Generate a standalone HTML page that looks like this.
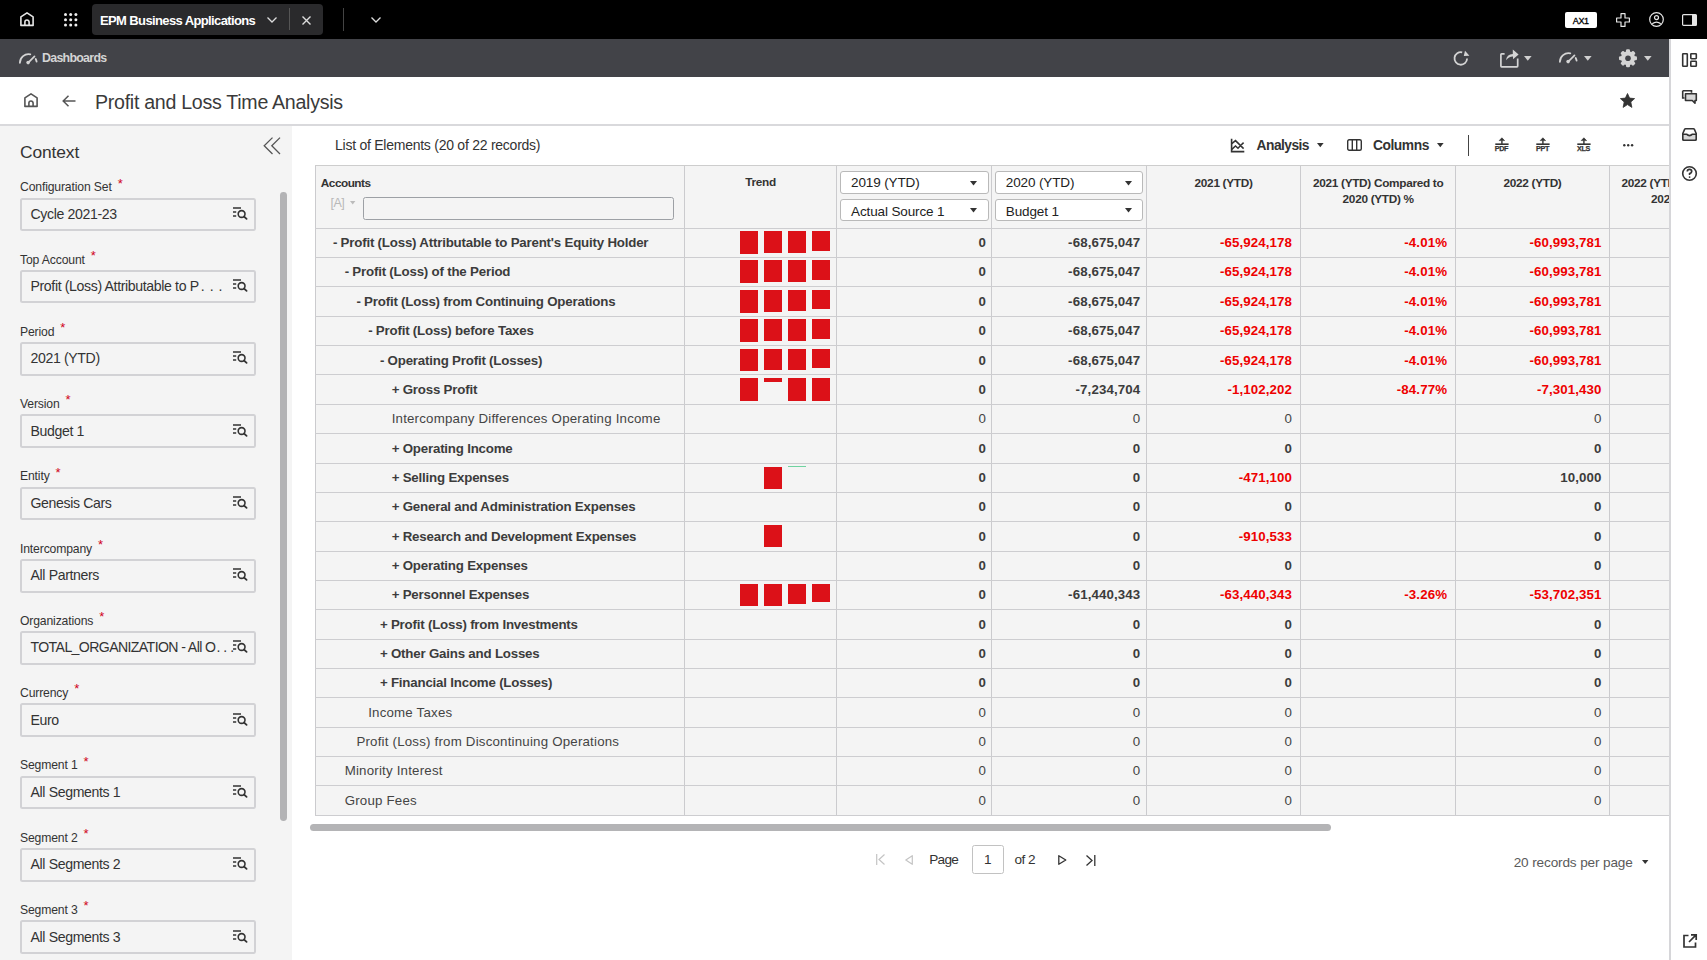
<!DOCTYPE html>
<html><head><meta charset="utf-8"><title>Profit and Loss Time Analysis</title>
<style>
*{box-sizing:border-box;margin:0;padding:0}
html,body{width:1707px;height:960px;overflow:hidden;background:#fff;font-family:"Liberation Sans",sans-serif;color:#333}
.a{position:absolute;white-space:nowrap}
svg{position:absolute;overflow:visible}
#top{left:0;top:0;width:1707px;height:39px;background:#000}
#bar2{left:0;top:39px;width:1670px;height:38px;background:#424348}
#side{left:1669px;top:39px;width:38px;height:921px;background:#fff;border-left:2px solid #d6d6d9}
#hdr{left:0;top:77px;width:1669px;height:49px;background:#fff;border-bottom:2px solid #d9d9dc}
#panel{left:0;top:126px;width:291.6px;height:834px;background:#f4f4f4}
.lbl{font-size:12.2px;letter-spacing:-0.15px;color:#333}
.ast{color:#d0021b;font-size:13px}
.inp{left:19.6px;width:236.4px;height:33.6px;border:2px solid #d2d2d5;border-radius:2.5px;background:#f4f4f4}
.val{font-size:14.1px;letter-spacing:-0.36px;color:#333}
.cell{font-size:13.3px;font-weight:700;color:#3c3c3c}
.cell.reg{color:#444}
.reg{font-weight:400}
.red{color:#ee0000}
.hd{font-size:11.8px;font-weight:700;letter-spacing:-0.3px;color:#333}
.bar{position:absolute;background:#dc1118}
.dd{position:absolute;background:#fff;border:1.3px solid #b9b9b9;border-radius:3px}
.ddt{font-size:13.5px;letter-spacing:-0.12px;color:#222}
</style></head><body>
<div class="a" id="top"></div>
<svg style="left:20px;top:12px" width="14" height="14" viewBox="0 0 14 14"><path d="M0.9 4.9 L7 0.9 L13.1 4.9 V13.4 H0.9 Z M4.9 13.4 V10.1 A2.1 2.1 0 0 1 9.1 10.1 V13.4" fill="none" stroke="#e6e6e6" stroke-width="1.6" stroke-linejoin="round"/></svg>
<svg style="left:64px;top:13px" width="14" height="14"><circle cx="1.5" cy="1.5" r="1.5" fill="#eee"/><circle cx="1.5" cy="6.7" r="1.5" fill="#eee"/><circle cx="1.5" cy="11.9" r="1.5" fill="#eee"/><circle cx="6.7" cy="1.5" r="1.5" fill="#eee"/><circle cx="6.7" cy="6.7" r="1.5" fill="#eee"/><circle cx="6.7" cy="11.9" r="1.5" fill="#eee"/><circle cx="11.9" cy="1.5" r="1.5" fill="#eee"/><circle cx="11.9" cy="6.7" r="1.5" fill="#eee"/><circle cx="11.9" cy="11.9" r="1.5" fill="#eee"/></svg>
<div class="a" style="left:92px;top:3.7px;width:230.7px;height:31.3px;background:#2a2a2c;border-radius:4px"></div>
<div class="a" style="left:100px;top:11.8px;font-size:13px;font-weight:700;letter-spacing:-0.62px;color:#fff;line-height:18px">EPM Business Applications</div>
<svg style="left:267px;top:17px" width="10" height="6"><path d="M0.5 0.5 L5 5 L9.5 0.5" fill="none" stroke="#ddd" stroke-width="1.3"/></svg>
<div class="a" style="left:289px;top:8.3px;width:1px;height:22px;background:#555"></div>
<svg style="left:302px;top:15.7px" width="9" height="9"><path d="M0.5 0.5 L8.5 8.5 M8.5 0.5 L0.5 8.5" fill="none" stroke="#ddd" stroke-width="1.4"/></svg>
<div class="a" style="left:342.5px;top:8.3px;width:1px;height:22.5px;background:#444"></div>
<svg style="left:371px;top:17px" width="10" height="6"><path d="M0.5 0.5 L5 5 L9.5 0.5" fill="none" stroke="#ddd" stroke-width="1.3"/></svg>
<div class="a" style="left:1565px;top:11.5px;width:31.5px;height:16.5px;background:#fff;border-radius:2px"></div>
<div class="a" style="left:1565px;top:16px;width:31.5px;text-align:center;font-size:9px;font-weight:400;color:#000;line-height:11px;letter-spacing:-0.3px;-webkit-text-stroke:0.3px #000">AX1</div>
<svg style="left:1615.5px;top:13px" width="14" height="14" viewBox="0 0 14 14"><path d="M5 0.6 H9 V5 H13.4 V9 H9 V13.4 H5 V9 H0.6 V5 H5 Z" fill="none" stroke="#e6e6e6" stroke-width="1.2" stroke-linejoin="round"/></svg>
<svg style="left:1649px;top:12px" width="15" height="15" viewBox="0 0 15 15"><circle cx="7.5" cy="7.5" r="6.8" fill="none" stroke="#e6e6e6" stroke-width="1.2"/><circle cx="7.5" cy="5.6" r="2" fill="none" stroke="#e6e6e6" stroke-width="1.2"/><path d="M3.2 11.8 Q7.5 8.5 11.8 11.8" fill="none" stroke="#e6e6e6" stroke-width="1.2"/></svg>
<svg style="left:1681.5px;top:13.6px" width="15" height="12" viewBox="0 0 15 12"><rect x="0.6" y="0.6" width="13.8" height="10.8" rx="1" fill="none" stroke="#e6e6e6" stroke-width="1.2"/><rect x="10" y="0.6" width="4.4" height="10.8" fill="#e6e6e6"/></svg>
<div class="a" id="bar2"></div>
<svg style="left:18px;top:51.5px" width="21" height="14" viewBox="0 0 21 14"><path d="M1.9 10.8 A8.6 8.6 0 0 1 12.3 2.4" fill="none" stroke="#d4d4d4" stroke-width="1.8" stroke-linecap="round"/><path d="M17.7 6.95 A8.2 8.2 0 0 1 18.6 9.66" fill="none" stroke="#d4d4d4" stroke-width="1.8" stroke-linecap="round"/><path d="M10.3 10.6 L16.5 4.4" stroke="#d4d4d4" stroke-width="1.7" stroke-linecap="round"/><circle cx="10.1" cy="10.6" r="1.8" fill="#d4d4d4"/></svg>
<div class="a" style="left:42px;top:49.5px;font-size:12.4px;font-weight:700;letter-spacing:-0.72px;color:#d4d4d4;line-height:16px">Dashboards</div>
<svg style="left:1453px;top:50px" width="18" height="18" viewBox="0 0 18 18"><path d="M14.1 8.6 A6.3 6.3 0 1 1 9.2 2.3" fill="none" stroke="#d4d4d4" stroke-width="1.8"/><path d="M12 0.8 L16.4 5.8 L10.8 5.9 Z" fill="#d4d4d4"/></svg>
<svg style="left:1499.5px;top:48.5px" width="20" height="20" viewBox="0 0 20 20"><path d="M4.6 4.9 H1.6 Q0.9 4.9 0.9 5.6 V17.1 Q0.9 17.9 1.6 17.9 H17 Q17.7 17.9 17.7 17.1 V9.6" fill="none" stroke="#d4d4d4" stroke-width="1.7"/><path d="M6 11.2 Q6.6 5.4 12.8 4.9 V0.4 L18.6 5.4 L13 10.2 V7.4 Q8.6 7.4 6 11.2 Z" fill="#d4d4d4"/></svg>
<svg style="left:1524px;top:56px" width="8" height="5"><path d="M0 0 H7.6 L3.8 4.8 Z" fill="#d0d0d0"/></svg>
<svg style="left:1558px;top:51px" width="21" height="14" viewBox="0 0 21 14"><path d="M1.9 10.8 A8.6 8.6 0 0 1 12.3 2.4" fill="none" stroke="#d4d4d4" stroke-width="1.8" stroke-linecap="round"/><path d="M17.7 6.95 A8.2 8.2 0 0 1 18.6 9.66" fill="none" stroke="#d4d4d4" stroke-width="1.8" stroke-linecap="round"/><path d="M10.3 10.6 L16.5 4.4" stroke="#d4d4d4" stroke-width="1.7" stroke-linecap="round"/><circle cx="10.1" cy="10.6" r="1.8" fill="#d4d4d4"/></svg>
<svg style="left:1584px;top:56px" width="8" height="5"><path d="M0 0 H7.6 L3.8 4.8 Z" fill="#d0d0d0"/></svg>
<svg style="left:1618px;top:48.5px" width="20" height="19" viewBox="0 0 19.6 19"><rect x="7.8" y="0.3" width="4" height="18" rx="1.2" fill="#d4d4d4" transform="rotate(0 9.8 9.3)"/><rect x="7.8" y="0.3" width="4" height="18" rx="1.2" fill="#d4d4d4" transform="rotate(45 9.8 9.3)"/><rect x="7.8" y="0.3" width="4" height="18" rx="1.2" fill="#d4d4d4" transform="rotate(90 9.8 9.3)"/><rect x="7.8" y="0.3" width="4" height="18" rx="1.2" fill="#d4d4d4" transform="rotate(135 9.8 9.3)"/><circle cx="9.8" cy="9.3" r="7" fill="#d4d4d4"/><circle cx="9.8" cy="9.3" r="2.8" fill="#424348"/></svg>
<svg style="left:1644px;top:56px" width="8" height="5"><path d="M0 0 H7.6 L3.8 4.8 Z" fill="#d0d0d0"/></svg>
<div class="a" id="hdr"></div>
<svg style="left:24px;top:93.2px" width="14" height="14" viewBox="0 0 14 14"><path d="M0.9 4.9 L7 0.9 L13.1 4.9 V13.4 H0.9 Z M4.9 13.4 V10.1 A2.1 2.1 0 0 1 9.1 10.1 V13.4" fill="none" stroke="#555" stroke-width="1.6" stroke-linejoin="round"/></svg>
<svg style="left:62px;top:95px" width="14" height="12" viewBox="0 0 14 12"><path d="M13.5 6 H1.5 M6.5 0.8 L1.2 6 L6.5 11.2" fill="none" stroke="#555" stroke-width="1.5"/></svg>
<div class="a" style="left:95px;top:90px;font-size:19.6px;letter-spacing:-0.28px;color:#3a3a3a;line-height:24px">Profit and Loss Time Analysis</div>
<svg style="left:1620px;top:93.2px" width="15" height="15" viewBox="0 0 15 15"><path d="M7.5 0.5 L9.6 5.1 L14.6 5.6 L10.8 9 L11.9 14.4 L7.5 11.6 L3.1 14.4 L4.2 9 L0.4 5.6 L5.4 5.1 Z" fill="#333" stroke="#333" stroke-width="0.8" stroke-linejoin="round"/></svg>
<div class="a" id="panel"></div>
<div class="a" style="left:20px;top:141px;font-size:17.4px;letter-spacing:-0.12px;color:#333;line-height:22px">Context</div>
<svg style="left:263px;top:137px" width="18" height="18" viewBox="0 0 18 18"><path d="M9.5 0.6 L1.2 8.8 L9.5 17 M17 0.6 L8.8 8.8 L17 17" fill="none" stroke="#555" stroke-width="1.3"/></svg>
<div class="a" style="left:280.3px;top:192px;width:6.8px;height:629px;background:#b3b3b5;border-radius:3.4px"></div>
<div class="a lbl" style="left:20px;top:179.30px;line-height:16px">Configuration Set<span class="ast" style="position:relative;left:6px;top:-3.8px">*</span></div>
<div class="a inp" style="top:197.60px"></div>
<div class="a val" style="left:30.5px;top:205.80px;line-height:17px">Cycle 2021-23</div>
<svg style="left:233px;top:206.80px" width="15" height="12" viewBox="0 0 15 12"><path d="M0 1 H8 M0 5 H3.2 M0 9 H3.2" stroke="#333" stroke-width="1.6"/><circle cx="8.6" cy="7" r="3.4" fill="none" stroke="#333" stroke-width="1.6"/><path d="M11 9.5 L13.6 11.8" stroke="#333" stroke-width="1.8" stroke-linecap="round"/></svg>
<div class="a lbl" style="left:20px;top:251.57px;line-height:16px">Top Account<span class="ast" style="position:relative;left:6px;top:-3.8px">*</span></div>
<div class="a inp" style="top:269.87px"></div>
<div class="a val" style="left:30.5px;top:278.07px;line-height:17px">Profit (Loss) Attributable to P<span style='letter-spacing:5px;margin-left:2px'>...</span></div>
<svg style="left:233px;top:279.07px" width="15" height="12" viewBox="0 0 15 12"><path d="M0 1 H8 M0 5 H3.2 M0 9 H3.2" stroke="#333" stroke-width="1.6"/><circle cx="8.6" cy="7" r="3.4" fill="none" stroke="#333" stroke-width="1.6"/><path d="M11 9.5 L13.6 11.8" stroke="#333" stroke-width="1.8" stroke-linecap="round"/></svg>
<div class="a lbl" style="left:20px;top:323.84px;line-height:16px">Period<span class="ast" style="position:relative;left:6px;top:-3.8px">*</span></div>
<div class="a inp" style="top:342.14px"></div>
<div class="a val" style="left:30.5px;top:350.34px;line-height:17px">2021 (YTD)</div>
<svg style="left:233px;top:351.34px" width="15" height="12" viewBox="0 0 15 12"><path d="M0 1 H8 M0 5 H3.2 M0 9 H3.2" stroke="#333" stroke-width="1.6"/><circle cx="8.6" cy="7" r="3.4" fill="none" stroke="#333" stroke-width="1.6"/><path d="M11 9.5 L13.6 11.8" stroke="#333" stroke-width="1.8" stroke-linecap="round"/></svg>
<div class="a lbl" style="left:20px;top:396.11px;line-height:16px">Version<span class="ast" style="position:relative;left:6px;top:-3.8px">*</span></div>
<div class="a inp" style="top:414.41px"></div>
<div class="a val" style="left:30.5px;top:422.61px;line-height:17px">Budget 1</div>
<svg style="left:233px;top:423.61px" width="15" height="12" viewBox="0 0 15 12"><path d="M0 1 H8 M0 5 H3.2 M0 9 H3.2" stroke="#333" stroke-width="1.6"/><circle cx="8.6" cy="7" r="3.4" fill="none" stroke="#333" stroke-width="1.6"/><path d="M11 9.5 L13.6 11.8" stroke="#333" stroke-width="1.8" stroke-linecap="round"/></svg>
<div class="a lbl" style="left:20px;top:468.38px;line-height:16px">Entity<span class="ast" style="position:relative;left:6px;top:-3.8px">*</span></div>
<div class="a inp" style="top:486.68px"></div>
<div class="a val" style="left:30.5px;top:494.88px;line-height:17px">Genesis Cars</div>
<svg style="left:233px;top:495.88px" width="15" height="12" viewBox="0 0 15 12"><path d="M0 1 H8 M0 5 H3.2 M0 9 H3.2" stroke="#333" stroke-width="1.6"/><circle cx="8.6" cy="7" r="3.4" fill="none" stroke="#333" stroke-width="1.6"/><path d="M11 9.5 L13.6 11.8" stroke="#333" stroke-width="1.8" stroke-linecap="round"/></svg>
<div class="a lbl" style="left:20px;top:540.65px;line-height:16px">Intercompany<span class="ast" style="position:relative;left:6px;top:-3.8px">*</span></div>
<div class="a inp" style="top:558.95px"></div>
<div class="a val" style="left:30.5px;top:567.15px;line-height:17px">All Partners</div>
<svg style="left:233px;top:568.15px" width="15" height="12" viewBox="0 0 15 12"><path d="M0 1 H8 M0 5 H3.2 M0 9 H3.2" stroke="#333" stroke-width="1.6"/><circle cx="8.6" cy="7" r="3.4" fill="none" stroke="#333" stroke-width="1.6"/><path d="M11 9.5 L13.6 11.8" stroke="#333" stroke-width="1.8" stroke-linecap="round"/></svg>
<div class="a lbl" style="left:20px;top:612.92px;line-height:16px">Organizations<span class="ast" style="position:relative;left:6px;top:-3.8px">*</span></div>
<div class="a inp" style="top:631.22px"></div>
<div class="a val" style="left:30.5px;top:639.42px;line-height:17px"><span style='letter-spacing:-0.6px'>TOTAL_ORGANIZATION - All O</span><span style='letter-spacing:3px;margin-left:1px'>...</span></div>
<svg style="left:233px;top:640.42px" width="15" height="12" viewBox="0 0 15 12"><path d="M0 1 H8 M0 5 H3.2 M0 9 H3.2" stroke="#333" stroke-width="1.6"/><circle cx="8.6" cy="7" r="3.4" fill="none" stroke="#333" stroke-width="1.6"/><path d="M11 9.5 L13.6 11.8" stroke="#333" stroke-width="1.8" stroke-linecap="round"/></svg>
<div class="a lbl" style="left:20px;top:685.19px;line-height:16px">Currency<span class="ast" style="position:relative;left:6px;top:-3.8px">*</span></div>
<div class="a inp" style="top:703.49px"></div>
<div class="a val" style="left:30.5px;top:711.69px;line-height:17px">Euro</div>
<svg style="left:233px;top:712.69px" width="15" height="12" viewBox="0 0 15 12"><path d="M0 1 H8 M0 5 H3.2 M0 9 H3.2" stroke="#333" stroke-width="1.6"/><circle cx="8.6" cy="7" r="3.4" fill="none" stroke="#333" stroke-width="1.6"/><path d="M11 9.5 L13.6 11.8" stroke="#333" stroke-width="1.8" stroke-linecap="round"/></svg>
<div class="a lbl" style="left:20px;top:757.46px;line-height:16px">Segment 1<span class="ast" style="position:relative;left:6px;top:-3.8px">*</span></div>
<div class="a inp" style="top:775.76px"></div>
<div class="a val" style="left:30.5px;top:783.96px;line-height:17px">All Segments 1</div>
<svg style="left:233px;top:784.96px" width="15" height="12" viewBox="0 0 15 12"><path d="M0 1 H8 M0 5 H3.2 M0 9 H3.2" stroke="#333" stroke-width="1.6"/><circle cx="8.6" cy="7" r="3.4" fill="none" stroke="#333" stroke-width="1.6"/><path d="M11 9.5 L13.6 11.8" stroke="#333" stroke-width="1.8" stroke-linecap="round"/></svg>
<div class="a lbl" style="left:20px;top:829.73px;line-height:16px">Segment 2<span class="ast" style="position:relative;left:6px;top:-3.8px">*</span></div>
<div class="a inp" style="top:848.03px"></div>
<div class="a val" style="left:30.5px;top:856.23px;line-height:17px">All Segments 2</div>
<svg style="left:233px;top:857.23px" width="15" height="12" viewBox="0 0 15 12"><path d="M0 1 H8 M0 5 H3.2 M0 9 H3.2" stroke="#333" stroke-width="1.6"/><circle cx="8.6" cy="7" r="3.4" fill="none" stroke="#333" stroke-width="1.6"/><path d="M11 9.5 L13.6 11.8" stroke="#333" stroke-width="1.8" stroke-linecap="round"/></svg>
<div class="a lbl" style="left:20px;top:902.00px;line-height:16px">Segment 3<span class="ast" style="position:relative;left:6px;top:-3.8px">*</span></div>
<div class="a inp" style="top:920.30px"></div>
<div class="a val" style="left:30.5px;top:928.50px;line-height:17px">All Segments 3</div>
<svg style="left:233px;top:929.50px" width="15" height="12" viewBox="0 0 15 12"><path d="M0 1 H8 M0 5 H3.2 M0 9 H3.2" stroke="#333" stroke-width="1.6"/><circle cx="8.6" cy="7" r="3.4" fill="none" stroke="#333" stroke-width="1.6"/><path d="M11 9.5 L13.6 11.8" stroke="#333" stroke-width="1.8" stroke-linecap="round"/></svg>
<div class="a" style="left:335px;top:137px;font-size:14px;letter-spacing:-0.25px;color:#333;line-height:16px">List of Elements (20 of 22 records)</div>
<svg style="left:1229.5px;top:137.5px" width="15" height="15" viewBox="0 0 15 15"><path d="M1.6 0.8 V13.6 H14.3" fill="none" stroke="#333" stroke-width="1.6"/><path d="M1.8 5.6 L5.5 2.6 L13.6 10.6 M1.8 11.4 L5.5 8 L8 10.3 L10.6 7.6 L13.6 4.6" fill="none" stroke="#333" stroke-width="1.5"/></svg>
<div class="a" style="left:1256.6px;top:137.5px;font-size:13.8px;font-weight:700;letter-spacing:-0.55px;color:#333;line-height:16px">Analysis</div>
<svg style="left:1316.7px;top:143px" width="7" height="5"><path d="M0 0 H6.6 L3.3 4.2 Z" fill="#333"/></svg>
<svg style="left:1347px;top:139px" width="15" height="12" viewBox="0 0 15 12"><rect x="0.7" y="0.7" width="13.6" height="10.6" rx="1.5" fill="none" stroke="#333" stroke-width="1.4"/><path d="M5.3 0.7 V11.3 M9.7 0.7 V11.3" stroke="#333" stroke-width="1.4"/></svg>
<div class="a" style="left:1373px;top:137.5px;font-size:13.8px;font-weight:700;letter-spacing:-0.45px;color:#333;line-height:16px">Columns</div>
<svg style="left:1437px;top:143px" width="7" height="5"><path d="M0 0 H6.6 L3.3 4.2 Z" fill="#333"/></svg>
<div class="a" style="left:1467.8px;top:134.5px;width:1.3px;height:21px;background:#444"></div>
<svg style="left:1495px;top:136.5px" width="14" height="9" viewBox="0 0 14 9"><path d="M6.9 0.8 L9.6 3.6 H4.2 Z" fill="#333" stroke="#333" stroke-width="0.6" stroke-linejoin="round"/><rect x="6.2" y="3.4" width="1.4" height="3.8" fill="#333"/><rect x="0.3" y="6.4" width="13.3" height="1.6" fill="#333"/></svg>
<div class="a" style="left:1494px;top:145.2px;width:15px;font-size:7.2px;font-weight:700;color:#333;line-height:7px;text-align:center;letter-spacing:-0.35px;-webkit-text-stroke:0.25px #333">PDF</div>
<svg style="left:1536px;top:136.5px" width="14" height="9" viewBox="0 0 14 9"><path d="M6.9 0.8 L9.6 3.6 H4.2 Z" fill="#333" stroke="#333" stroke-width="0.6" stroke-linejoin="round"/><rect x="6.2" y="3.4" width="1.4" height="3.8" fill="#333"/><rect x="0.3" y="6.4" width="13.3" height="1.6" fill="#333"/></svg>
<div class="a" style="left:1535px;top:145.2px;width:15px;font-size:7.2px;font-weight:700;color:#333;line-height:7px;text-align:center;letter-spacing:-0.35px;-webkit-text-stroke:0.25px #333">PPT</div>
<svg style="left:1577px;top:136.5px" width="14" height="9" viewBox="0 0 14 9"><path d="M6.9 0.8 L9.6 3.6 H4.2 Z" fill="#333" stroke="#333" stroke-width="0.6" stroke-linejoin="round"/><rect x="6.2" y="3.4" width="1.4" height="3.8" fill="#333"/><rect x="0.3" y="6.4" width="13.3" height="1.6" fill="#333"/></svg>
<div class="a" style="left:1576px;top:145.2px;width:15px;font-size:7.2px;font-weight:700;color:#333;line-height:7px;text-align:center;letter-spacing:-0.35px;-webkit-text-stroke:0.25px #333">XLS</div>
<svg style="left:1622.5px;top:143.5px" width="11" height="3"><circle cx="1.3" cy="1.3" r="1.2" fill="#333"/><circle cx="5.2" cy="1.3" r="1.2" fill="#333"/><circle cx="9.1" cy="1.3" r="1.2" fill="#333"/></svg>
<div class="a" style="left:315px;top:165px;width:1354px;height:651.2px;background:#f4f4f4;overflow:hidden">
<div class="a" style="left:0px;top:0;width:1px;height:651.20px;background:#cbcbce"></div>
<div class="a" style="left:369px;top:0;width:1px;height:651.20px;background:#cbcbce"></div>
<div class="a" style="left:521px;top:0;width:1px;height:651.20px;background:#cbcbce"></div>
<div class="a" style="left:676px;top:0;width:1px;height:651.20px;background:#cbcbce"></div>
<div class="a" style="left:831px;top:0;width:1px;height:651.20px;background:#cbcbce"></div>
<div class="a" style="left:985px;top:0;width:1px;height:651.20px;background:#cbcbce"></div>
<div class="a" style="left:1140px;top:0;width:1px;height:651.20px;background:#cbcbce"></div>
<div class="a" style="left:1294px;top:0;width:1px;height:651.20px;background:#cbcbce"></div>
<div class="a" style="left:1448px;top:0;width:1px;height:651.20px;background:#cbcbce"></div>
<div class="a" style="left:0;top:0;width:1400px;height:1.3px;background:#cdcdcd"></div>
<div class="a" style="left:0;top:63px;width:1400px;height:1px;background:#cdcdd0"></div>
<div class="a" style="left:0;top:92px;width:1400px;height:1px;background:#cdcdd0"></div>
<div class="a" style="left:0;top:121px;width:1400px;height:1px;background:#cdcdd0"></div>
<div class="a" style="left:0;top:151px;width:1400px;height:1px;background:#cdcdd0"></div>
<div class="a" style="left:0;top:180px;width:1400px;height:1px;background:#cdcdd0"></div>
<div class="a" style="left:0;top:209px;width:1400px;height:1px;background:#cdcdd0"></div>
<div class="a" style="left:0;top:239px;width:1400px;height:1px;background:#cdcdd0"></div>
<div class="a" style="left:0;top:268px;width:1400px;height:1px;background:#cdcdd0"></div>
<div class="a" style="left:0;top:298px;width:1400px;height:1px;background:#cdcdd0"></div>
<div class="a" style="left:0;top:327px;width:1400px;height:1px;background:#cdcdd0"></div>
<div class="a" style="left:0;top:356px;width:1400px;height:1px;background:#cdcdd0"></div>
<div class="a" style="left:0;top:386px;width:1400px;height:1px;background:#cdcdd0"></div>
<div class="a" style="left:0;top:415px;width:1400px;height:1px;background:#cdcdd0"></div>
<div class="a" style="left:0;top:444px;width:1400px;height:1px;background:#cdcdd0"></div>
<div class="a" style="left:0;top:474px;width:1400px;height:1px;background:#cdcdd0"></div>
<div class="a" style="left:0;top:503px;width:1400px;height:1px;background:#cdcdd0"></div>
<div class="a" style="left:0;top:532px;width:1400px;height:1px;background:#cdcdd0"></div>
<div class="a" style="left:0;top:562px;width:1400px;height:1px;background:#cdcdd0"></div>
<div class="a" style="left:0;top:591px;width:1400px;height:1px;background:#cdcdd0"></div>
<div class="a" style="left:0;top:620px;width:1400px;height:1px;background:#cdcdd0"></div>
<div class="a" style="left:0;top:650px;width:1400px;height:1px;background:#cdcdd0"></div>
</div>
<div class="a hd" style="left:320.8px;top:176px;line-height:14px;letter-spacing:-0.5px">Accounts</div>
<div class="a" style="left:330.5px;top:195.5px;font-size:12.5px;color:#b8b8b8;line-height:14px;letter-spacing:-0.5px">[A]</div>
<svg style="left:350px;top:201px" width="6" height="4"><path d="M0 0 H5.4 L2.7 3.4 Z" fill="#bbb"/></svg>
<div class="a" style="left:363px;top:197.3px;width:311.4px;height:22.3px;border:1.6px solid #9da0a5;border-radius:2.5px;background:#f4f4f4"></div>
<div class="a hd" style="left:684.5px;top:175px;width:152px;text-align:center;line-height:14px">Trend</div>
<div class="dd" style="left:840px;top:171.4px;width:148.7px;height:23.1px"></div>
<div class="dd" style="left:840px;top:198.8px;width:148.7px;height:22.6px"></div>
<div class="a ddt" style="left:851px;top:175px;line-height:16px">2019 (YTD)</div>
<div class="a ddt" style="left:851px;top:203.5px;line-height:16px">Actual Source 1</div>
<svg style="left:970px;top:180.5px" width="8" height="5"><path d="M0 0 H7 L3.5 4.4 Z" fill="#333"/></svg>
<svg style="left:970px;top:207.8px" width="8" height="5"><path d="M0 0 H7 L3.5 4.4 Z" fill="#333"/></svg>
<div class="dd" style="left:994.8px;top:171.4px;width:148.7px;height:23.1px"></div>
<div class="dd" style="left:994.8px;top:198.8px;width:148.7px;height:22.6px"></div>
<div class="a ddt" style="left:1005.8px;top:175px;line-height:16px">2020 (YTD)</div>
<div class="a ddt" style="left:1005.8px;top:203.5px;line-height:16px">Budget 1</div>
<svg style="left:1124.8px;top:180.5px" width="8" height="5"><path d="M0 0 H7 L3.5 4.4 Z" fill="#333"/></svg>
<svg style="left:1124.8px;top:207.8px" width="8" height="5"><path d="M0 0 H7 L3.5 4.4 Z" fill="#333"/></svg>
<div class="a hd" style="left:1146.5px;top:174.6px;width:154.2px;text-align:center;line-height:16.5px;white-space:normal">2021 (YTD)</div>
<div class="a hd" style="left:1300.7px;top:174.6px;width:155.0px;text-align:center;line-height:16.5px;white-space:normal">2021 (YTD) Compared to<br>2020 (YTD) %</div>
<div class="a hd" style="left:1455.7px;top:174.6px;width:153.7px;text-align:center;line-height:16.5px;white-space:normal">2022 (YTD)</div>
<div class="a hd" style="left:1609.4px;top:174.6px;width:154.6px;text-align:center;line-height:16.5px;white-space:normal">2022 (YTD) Compared to<br>2021 (YTD) %</div>
<div class="a cell" style="left:332.90px;top:235.10px;line-height:16px;letter-spacing:-0.2px">- Profit (Loss) Attributable to Parent's Equity Holder</div>
<div class="a cell" style="left:791.30px;width:194.70px;text-align:right;top:235.10px;line-height:16px;letter-spacing:0.1px">0</div>
<div class="a cell" style="left:946.50px;width:193.70px;text-align:right;top:235.10px;line-height:16px;letter-spacing:0.1px">-68,675,047</div>
<div class="a cell red" style="left:1100.70px;width:191.30px;text-align:right;top:235.10px;line-height:16px;letter-spacing:0.1px">-65,924,178</div>
<div class="a cell red" style="left:1255.70px;width:191.40px;text-align:right;top:235.10px;line-height:16px;letter-spacing:0.1px">-4.01%</div>
<div class="a cell red" style="left:1409.40px;width:192.10px;text-align:right;top:235.10px;line-height:16px;letter-spacing:0.1px">-60,993,781</div>
<div class="bar" style="left:740px;top:231.10px;width:18px;height:22.9px"></div>
<div class="bar" style="left:764px;top:231.10px;width:18px;height:21.9px"></div>
<div class="bar" style="left:788px;top:231.10px;width:18px;height:21.5px"></div>
<div class="bar" style="left:812px;top:231.10px;width:18px;height:19.5px"></div>
<div class="a cell" style="left:344.65px;top:264.45px;line-height:16px;letter-spacing:-0.2px">- Profit (Loss) of the Period</div>
<div class="a cell" style="left:791.30px;width:194.70px;text-align:right;top:264.45px;line-height:16px;letter-spacing:0.1px">0</div>
<div class="a cell" style="left:946.50px;width:193.70px;text-align:right;top:264.45px;line-height:16px;letter-spacing:0.1px">-68,675,047</div>
<div class="a cell red" style="left:1100.70px;width:191.30px;text-align:right;top:264.45px;line-height:16px;letter-spacing:0.1px">-65,924,178</div>
<div class="a cell red" style="left:1255.70px;width:191.40px;text-align:right;top:264.45px;line-height:16px;letter-spacing:0.1px">-4.01%</div>
<div class="a cell red" style="left:1409.40px;width:192.10px;text-align:right;top:264.45px;line-height:16px;letter-spacing:0.1px">-60,993,781</div>
<div class="bar" style="left:740px;top:260.45px;width:18px;height:22.9px"></div>
<div class="bar" style="left:764px;top:260.45px;width:18px;height:21.9px"></div>
<div class="bar" style="left:788px;top:260.45px;width:18px;height:21.5px"></div>
<div class="bar" style="left:812px;top:260.45px;width:18px;height:19.5px"></div>
<div class="a cell" style="left:356.40px;top:293.80px;line-height:16px;letter-spacing:-0.2px">- Profit (Loss) from Continuing Operations</div>
<div class="a cell" style="left:791.30px;width:194.70px;text-align:right;top:293.80px;line-height:16px;letter-spacing:0.1px">0</div>
<div class="a cell" style="left:946.50px;width:193.70px;text-align:right;top:293.80px;line-height:16px;letter-spacing:0.1px">-68,675,047</div>
<div class="a cell red" style="left:1100.70px;width:191.30px;text-align:right;top:293.80px;line-height:16px;letter-spacing:0.1px">-65,924,178</div>
<div class="a cell red" style="left:1255.70px;width:191.40px;text-align:right;top:293.80px;line-height:16px;letter-spacing:0.1px">-4.01%</div>
<div class="a cell red" style="left:1409.40px;width:192.10px;text-align:right;top:293.80px;line-height:16px;letter-spacing:0.1px">-60,993,781</div>
<div class="bar" style="left:740px;top:289.80px;width:18px;height:22.9px"></div>
<div class="bar" style="left:764px;top:289.80px;width:18px;height:21.9px"></div>
<div class="bar" style="left:788px;top:289.80px;width:18px;height:21.5px"></div>
<div class="bar" style="left:812px;top:289.80px;width:18px;height:19.5px"></div>
<div class="a cell" style="left:368.15px;top:323.15px;line-height:16px;letter-spacing:-0.2px">- Profit (Loss) before Taxes</div>
<div class="a cell" style="left:791.30px;width:194.70px;text-align:right;top:323.15px;line-height:16px;letter-spacing:0.1px">0</div>
<div class="a cell" style="left:946.50px;width:193.70px;text-align:right;top:323.15px;line-height:16px;letter-spacing:0.1px">-68,675,047</div>
<div class="a cell red" style="left:1100.70px;width:191.30px;text-align:right;top:323.15px;line-height:16px;letter-spacing:0.1px">-65,924,178</div>
<div class="a cell red" style="left:1255.70px;width:191.40px;text-align:right;top:323.15px;line-height:16px;letter-spacing:0.1px">-4.01%</div>
<div class="a cell red" style="left:1409.40px;width:192.10px;text-align:right;top:323.15px;line-height:16px;letter-spacing:0.1px">-60,993,781</div>
<div class="bar" style="left:740px;top:319.15px;width:18px;height:22.9px"></div>
<div class="bar" style="left:764px;top:319.15px;width:18px;height:21.9px"></div>
<div class="bar" style="left:788px;top:319.15px;width:18px;height:21.5px"></div>
<div class="bar" style="left:812px;top:319.15px;width:18px;height:19.5px"></div>
<div class="a cell" style="left:379.90px;top:352.50px;line-height:16px;letter-spacing:-0.2px">- Operating Profit (Losses)</div>
<div class="a cell" style="left:791.30px;width:194.70px;text-align:right;top:352.50px;line-height:16px;letter-spacing:0.1px">0</div>
<div class="a cell" style="left:946.50px;width:193.70px;text-align:right;top:352.50px;line-height:16px;letter-spacing:0.1px">-68,675,047</div>
<div class="a cell red" style="left:1100.70px;width:191.30px;text-align:right;top:352.50px;line-height:16px;letter-spacing:0.1px">-65,924,178</div>
<div class="a cell red" style="left:1255.70px;width:191.40px;text-align:right;top:352.50px;line-height:16px;letter-spacing:0.1px">-4.01%</div>
<div class="a cell red" style="left:1409.40px;width:192.10px;text-align:right;top:352.50px;line-height:16px;letter-spacing:0.1px">-60,993,781</div>
<div class="bar" style="left:740px;top:348.50px;width:18px;height:22.9px"></div>
<div class="bar" style="left:764px;top:348.50px;width:18px;height:21.9px"></div>
<div class="bar" style="left:788px;top:348.50px;width:18px;height:21.5px"></div>
<div class="bar" style="left:812px;top:348.50px;width:18px;height:19.5px"></div>
<div class="a cell" style="left:391.65px;top:381.85px;line-height:16px;letter-spacing:-0.2px">+ Gross Profit</div>
<div class="a cell" style="left:791.30px;width:194.70px;text-align:right;top:381.85px;line-height:16px;letter-spacing:0.1px">0</div>
<div class="a cell" style="left:946.50px;width:193.70px;text-align:right;top:381.85px;line-height:16px;letter-spacing:0.1px">-7,234,704</div>
<div class="a cell red" style="left:1100.70px;width:191.30px;text-align:right;top:381.85px;line-height:16px;letter-spacing:0.1px">-1,102,202</div>
<div class="a cell red" style="left:1255.70px;width:191.40px;text-align:right;top:381.85px;line-height:16px;letter-spacing:0.1px">-84.77%</div>
<div class="a cell red" style="left:1409.40px;width:192.10px;text-align:right;top:381.85px;line-height:16px;letter-spacing:0.1px">-7,301,430</div>
<div class="bar" style="left:740px;top:377.85px;width:18px;height:23.2px"></div>
<div class="bar" style="left:764px;top:377.85px;width:18px;height:3.9px"></div>
<div class="bar" style="left:788px;top:377.85px;width:18px;height:23.2px"></div>
<div class="bar" style="left:812px;top:377.85px;width:18px;height:23.2px"></div>
<div class="a cell reg" style="left:391.65px;top:411.20px;line-height:16px;letter-spacing:0.2px">Intercompany Differences Operating Income</div>
<div class="a cell reg" style="left:791.30px;width:194.70px;text-align:right;top:411.20px;line-height:16px;letter-spacing:0.1px">0</div>
<div class="a cell reg" style="left:946.50px;width:193.70px;text-align:right;top:411.20px;line-height:16px;letter-spacing:0.1px">0</div>
<div class="a cell reg" style="left:1100.70px;width:191.30px;text-align:right;top:411.20px;line-height:16px;letter-spacing:0.1px">0</div>
<div class="a cell reg" style="left:1409.40px;width:192.10px;text-align:right;top:411.20px;line-height:16px;letter-spacing:0.1px">0</div>
<div class="a cell" style="left:391.65px;top:440.55px;line-height:16px;letter-spacing:-0.2px">+ Operating Income</div>
<div class="a cell" style="left:791.30px;width:194.70px;text-align:right;top:440.55px;line-height:16px;letter-spacing:0.1px">0</div>
<div class="a cell" style="left:946.50px;width:193.70px;text-align:right;top:440.55px;line-height:16px;letter-spacing:0.1px">0</div>
<div class="a cell" style="left:1100.70px;width:191.30px;text-align:right;top:440.55px;line-height:16px;letter-spacing:0.1px">0</div>
<div class="a cell" style="left:1409.40px;width:192.10px;text-align:right;top:440.55px;line-height:16px;letter-spacing:0.1px">0</div>
<div class="a cell" style="left:391.65px;top:469.90px;line-height:16px;letter-spacing:-0.2px">+ Selling Expenses</div>
<div class="a cell" style="left:791.30px;width:194.70px;text-align:right;top:469.90px;line-height:16px;letter-spacing:0.1px">0</div>
<div class="a cell" style="left:946.50px;width:193.70px;text-align:right;top:469.90px;line-height:16px;letter-spacing:0.1px">0</div>
<div class="a cell red" style="left:1100.70px;width:191.30px;text-align:right;top:469.90px;line-height:16px;letter-spacing:0.1px">-471,100</div>
<div class="a cell" style="left:1409.40px;width:192.10px;text-align:right;top:469.90px;line-height:16px;letter-spacing:0.1px">10,000</div>
<div class="bar" style="left:764px;top:467.30px;width:18px;height:21.9px"></div>
<div class="a" style="left:788px;top:466.00px;width:18px;height:1.2px;background:#6fd3a0"></div>
<div class="a cell" style="left:391.65px;top:499.25px;line-height:16px;letter-spacing:-0.2px">+ General and Administration Expenses</div>
<div class="a cell" style="left:791.30px;width:194.70px;text-align:right;top:499.25px;line-height:16px;letter-spacing:0.1px">0</div>
<div class="a cell" style="left:946.50px;width:193.70px;text-align:right;top:499.25px;line-height:16px;letter-spacing:0.1px">0</div>
<div class="a cell" style="left:1100.70px;width:191.30px;text-align:right;top:499.25px;line-height:16px;letter-spacing:0.1px">0</div>
<div class="a cell" style="left:1409.40px;width:192.10px;text-align:right;top:499.25px;line-height:16px;letter-spacing:0.1px">0</div>
<div class="a cell" style="left:391.65px;top:528.60px;line-height:16px;letter-spacing:-0.2px">+ Research and Development Expenses</div>
<div class="a cell" style="left:791.30px;width:194.70px;text-align:right;top:528.60px;line-height:16px;letter-spacing:0.1px">0</div>
<div class="a cell" style="left:946.50px;width:193.70px;text-align:right;top:528.60px;line-height:16px;letter-spacing:0.1px">0</div>
<div class="a cell red" style="left:1100.70px;width:191.30px;text-align:right;top:528.60px;line-height:16px;letter-spacing:0.1px">-910,533</div>
<div class="a cell" style="left:1409.40px;width:192.10px;text-align:right;top:528.60px;line-height:16px;letter-spacing:0.1px">0</div>
<div class="bar" style="left:764px;top:524.70px;width:18px;height:22.5px"></div>
<div class="a cell" style="left:391.65px;top:557.95px;line-height:16px;letter-spacing:-0.2px">+ Operating Expenses</div>
<div class="a cell" style="left:791.30px;width:194.70px;text-align:right;top:557.95px;line-height:16px;letter-spacing:0.1px">0</div>
<div class="a cell" style="left:946.50px;width:193.70px;text-align:right;top:557.95px;line-height:16px;letter-spacing:0.1px">0</div>
<div class="a cell" style="left:1100.70px;width:191.30px;text-align:right;top:557.95px;line-height:16px;letter-spacing:0.1px">0</div>
<div class="a cell" style="left:1409.40px;width:192.10px;text-align:right;top:557.95px;line-height:16px;letter-spacing:0.1px">0</div>
<div class="a cell" style="left:391.65px;top:587.30px;line-height:16px;letter-spacing:-0.2px">+ Personnel Expenses</div>
<div class="a cell" style="left:791.30px;width:194.70px;text-align:right;top:587.30px;line-height:16px;letter-spacing:0.1px">0</div>
<div class="a cell" style="left:946.50px;width:193.70px;text-align:right;top:587.30px;line-height:16px;letter-spacing:0.1px">-61,440,343</div>
<div class="a cell red" style="left:1100.70px;width:191.30px;text-align:right;top:587.30px;line-height:16px;letter-spacing:0.1px">-63,440,343</div>
<div class="a cell red" style="left:1255.70px;width:191.40px;text-align:right;top:587.30px;line-height:16px;letter-spacing:0.1px">-3.26%</div>
<div class="a cell red" style="left:1409.40px;width:192.10px;text-align:right;top:587.30px;line-height:16px;letter-spacing:0.1px">-53,702,351</div>
<div class="bar" style="left:740px;top:583.60px;width:18px;height:22.5px"></div>
<div class="bar" style="left:764px;top:583.60px;width:18px;height:22.5px"></div>
<div class="bar" style="left:788px;top:583.60px;width:18px;height:20px"></div>
<div class="bar" style="left:812px;top:583.60px;width:18px;height:18.4px"></div>
<div class="a cell" style="left:379.90px;top:616.65px;line-height:16px;letter-spacing:-0.2px">+ Profit (Loss) from Investments</div>
<div class="a cell" style="left:791.30px;width:194.70px;text-align:right;top:616.65px;line-height:16px;letter-spacing:0.1px">0</div>
<div class="a cell" style="left:946.50px;width:193.70px;text-align:right;top:616.65px;line-height:16px;letter-spacing:0.1px">0</div>
<div class="a cell" style="left:1100.70px;width:191.30px;text-align:right;top:616.65px;line-height:16px;letter-spacing:0.1px">0</div>
<div class="a cell" style="left:1409.40px;width:192.10px;text-align:right;top:616.65px;line-height:16px;letter-spacing:0.1px">0</div>
<div class="a cell" style="left:379.90px;top:646.00px;line-height:16px;letter-spacing:-0.2px">+ Other Gains and Losses</div>
<div class="a cell" style="left:791.30px;width:194.70px;text-align:right;top:646.00px;line-height:16px;letter-spacing:0.1px">0</div>
<div class="a cell" style="left:946.50px;width:193.70px;text-align:right;top:646.00px;line-height:16px;letter-spacing:0.1px">0</div>
<div class="a cell" style="left:1100.70px;width:191.30px;text-align:right;top:646.00px;line-height:16px;letter-spacing:0.1px">0</div>
<div class="a cell" style="left:1409.40px;width:192.10px;text-align:right;top:646.00px;line-height:16px;letter-spacing:0.1px">0</div>
<div class="a cell" style="left:379.90px;top:675.35px;line-height:16px;letter-spacing:-0.2px">+ Financial Income (Losses)</div>
<div class="a cell" style="left:791.30px;width:194.70px;text-align:right;top:675.35px;line-height:16px;letter-spacing:0.1px">0</div>
<div class="a cell" style="left:946.50px;width:193.70px;text-align:right;top:675.35px;line-height:16px;letter-spacing:0.1px">0</div>
<div class="a cell" style="left:1100.70px;width:191.30px;text-align:right;top:675.35px;line-height:16px;letter-spacing:0.1px">0</div>
<div class="a cell" style="left:1409.40px;width:192.10px;text-align:right;top:675.35px;line-height:16px;letter-spacing:0.1px">0</div>
<div class="a cell reg" style="left:368.15px;top:704.70px;line-height:16px;letter-spacing:0.2px">Income Taxes</div>
<div class="a cell reg" style="left:791.30px;width:194.70px;text-align:right;top:704.70px;line-height:16px;letter-spacing:0.1px">0</div>
<div class="a cell reg" style="left:946.50px;width:193.70px;text-align:right;top:704.70px;line-height:16px;letter-spacing:0.1px">0</div>
<div class="a cell reg" style="left:1100.70px;width:191.30px;text-align:right;top:704.70px;line-height:16px;letter-spacing:0.1px">0</div>
<div class="a cell reg" style="left:1409.40px;width:192.10px;text-align:right;top:704.70px;line-height:16px;letter-spacing:0.1px">0</div>
<div class="a cell reg" style="left:356.40px;top:734.05px;line-height:16px;letter-spacing:0.2px">Profit (Loss) from Discontinuing Operations</div>
<div class="a cell reg" style="left:791.30px;width:194.70px;text-align:right;top:734.05px;line-height:16px;letter-spacing:0.1px">0</div>
<div class="a cell reg" style="left:946.50px;width:193.70px;text-align:right;top:734.05px;line-height:16px;letter-spacing:0.1px">0</div>
<div class="a cell reg" style="left:1100.70px;width:191.30px;text-align:right;top:734.05px;line-height:16px;letter-spacing:0.1px">0</div>
<div class="a cell reg" style="left:1409.40px;width:192.10px;text-align:right;top:734.05px;line-height:16px;letter-spacing:0.1px">0</div>
<div class="a cell reg" style="left:344.65px;top:763.40px;line-height:16px;letter-spacing:0.2px">Minority Interest</div>
<div class="a cell reg" style="left:791.30px;width:194.70px;text-align:right;top:763.40px;line-height:16px;letter-spacing:0.1px">0</div>
<div class="a cell reg" style="left:946.50px;width:193.70px;text-align:right;top:763.40px;line-height:16px;letter-spacing:0.1px">0</div>
<div class="a cell reg" style="left:1100.70px;width:191.30px;text-align:right;top:763.40px;line-height:16px;letter-spacing:0.1px">0</div>
<div class="a cell reg" style="left:1409.40px;width:192.10px;text-align:right;top:763.40px;line-height:16px;letter-spacing:0.1px">0</div>
<div class="a cell reg" style="left:344.65px;top:792.75px;line-height:16px;letter-spacing:0.2px">Group Fees</div>
<div class="a cell reg" style="left:791.30px;width:194.70px;text-align:right;top:792.75px;line-height:16px;letter-spacing:0.1px">0</div>
<div class="a cell reg" style="left:946.50px;width:193.70px;text-align:right;top:792.75px;line-height:16px;letter-spacing:0.1px">0</div>
<div class="a cell reg" style="left:1100.70px;width:191.30px;text-align:right;top:792.75px;line-height:16px;letter-spacing:0.1px">0</div>
<div class="a cell reg" style="left:1409.40px;width:192.10px;text-align:right;top:792.75px;line-height:16px;letter-spacing:0.1px">0</div>
<div class="a" id="side"></div>
<svg style="left:1682px;top:53px" width="15" height="14" viewBox="0 0 15 14"><rect x="0.7" y="0.7" width="4.6" height="12.6" rx="0.6" fill="none" stroke="#333" stroke-width="1.6"/><rect x="8.8" y="0.7" width="5.5" height="5" rx="0.6" fill="none" stroke="#333" stroke-width="1.6"/><rect x="8.8" y="8.3" width="5.5" height="5" rx="0.6" fill="none" stroke="#333" stroke-width="1.6"/></svg>
<svg style="left:1682px;top:90px" width="15" height="14" viewBox="0 0 15 14"><path d="M0.7 0.7 H9.5 V2.8 M0.7 0.7 V8 H2.5" fill="none" stroke="#333" stroke-width="1.6"/><path d="M3.5 3.8 H14.3 V10.5 H13 V13.3 L10.3 10.5 H3.5 Z" fill="#d8d8d8" stroke="#333" stroke-width="1.6" stroke-linejoin="round"/></svg>
<svg style="left:1682px;top:127.7px" width="15" height="13" viewBox="0 0 15 13"><path d="M0.8 5.5 L2.6 1.4 Q2.9 0.8 3.6 0.8 H11.4 Q12.1 0.8 12.4 1.4 L14.2 5.5 V11 Q14.2 12.2 13 12.2 H2 Q0.8 12.2 0.8 11 Z" fill="none" stroke="#333" stroke-width="1.6" stroke-linejoin="round"/><path d="M0.8 6.2 H4.5 Q7.5 9 10.5 6.2 H14.2 V11 Q14.2 12.2 13 12.2 H2 Q0.8 12.2 0.8 11 Z" fill="#d8d8d8" stroke="#333" stroke-width="1.6" stroke-linejoin="round"/></svg>
<svg style="left:1682px;top:165.5px" width="15" height="15" viewBox="0 0 15 15"><circle cx="7.5" cy="7.5" r="6.8" fill="none" stroke="#333" stroke-width="1.6"/><path d="M5.3 5.6 Q5.3 3.4 7.5 3.4 Q9.7 3.4 9.7 5.4 Q9.7 6.8 7.6 7.6 V9" fill="none" stroke="#333" stroke-width="1.7"/><circle cx="7.6" cy="11.1" r="0.9" fill="#333"/></svg>
<svg style="left:1683px;top:933.5px" width="14" height="14" viewBox="0 0 14 14"><path d="M5.5 1.5 H1 V13 H12.5 V8.5" fill="none" stroke="#333" stroke-width="1.7"/><path d="M6 8 L12.8 1.2 M8 0.8 H13.2 V6" fill="none" stroke="#333" stroke-width="1.7"/></svg>
<div class="a" style="left:310px;top:823.8px;width:1021px;height:7.2px;background:#b4b4b6;border-radius:3.6px"></div>
<svg style="left:875.7px;top:854px" width="9" height="11" viewBox="0 0 9 11"><path d="M0.7 0 V11 M8.5 0.5 L3 5.5 L8.5 10.5" fill="none" stroke="#c4c4c4" stroke-width="1.2"/></svg>
<svg style="left:905px;top:855px" width="8" height="10" viewBox="0 0 8 10"><path d="M7.3 0.7 V9.3 L0.8 5 Z" fill="none" stroke="#c4c4c4" stroke-width="1.2" stroke-linejoin="round"/></svg>
<div class="a" style="left:929.3px;top:851px;font-size:13.6px;letter-spacing:-0.75px;color:#333;line-height:17px">Page</div>
<div class="a" style="left:971.5px;top:845.2px;width:32.5px;height:29px;border:1.3px solid #c2c2c2;border-radius:2.5px;background:#fff"></div>
<div class="a" style="left:971.5px;top:851px;width:32.5px;text-align:center;font-size:13.6px;color:#333;line-height:17px">1</div>
<div class="a" style="left:1014.6px;top:851px;font-size:13.6px;letter-spacing:-0.6px;color:#333;line-height:17px">of 2</div>
<svg style="left:1058px;top:855px" width="9" height="10" viewBox="0 0 9 10"><path d="M0.8 0.7 V9.3 L7.8 5 Z" fill="none" stroke="#333" stroke-width="1.3" stroke-linejoin="round"/></svg>
<svg style="left:1085.7px;top:854.5px" width="10" height="11" viewBox="0 0 10 11"><path d="M0.5 0.5 L6 5.5 L0.5 10.5 M8.8 0 V11" fill="none" stroke="#333" stroke-width="1.3"/></svg>
<div class="a" style="left:1513.7px;top:853.8px;font-size:13.6px;letter-spacing:-0.14px;color:#5a5a5a;line-height:17px">20 records per page</div>
<svg style="left:1642px;top:860.2px" width="7" height="5"><path d="M0 0 H6.4 L3.2 4 Z" fill="#333"/></svg>
</body></html>
